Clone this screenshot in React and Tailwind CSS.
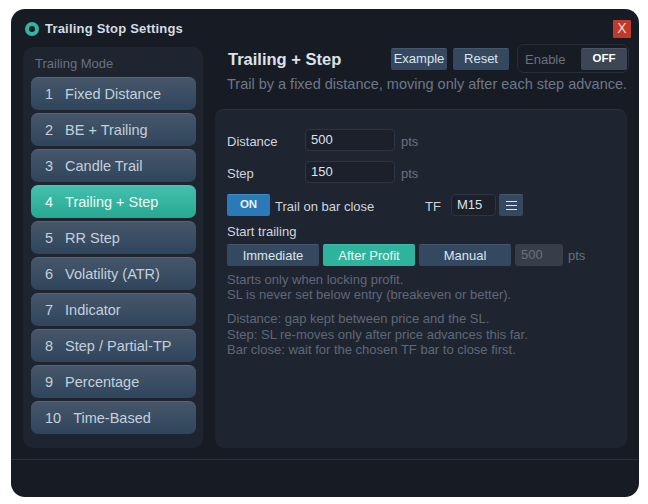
import React from "react";

const modes = [
  ["1", "Fixed Distance"],
  ["2", "BE + Trailing"],
  ["3", "Candle Trail"],
  ["4", "Trailing + Step"],
  ["5", "RR Step"],
  ["6", "Volatility (ATR)"],
  ["7", "Indicator"],
  ["8", "Step / Partial-TP"],
  ["9", "Percentage"],
  ["10", "Time-Based"],
];

function ModeButton({ n, label }) {
  const active = n === "4";
  return (
    <div
      className={
        active
          ? "h-[33px] rounded-[7px] flex items-center text-[14.5px] pl-[14px] pt-[1px] text-[#eafaf6] border-t border-[#4cc4b2] bg-gradient-to-b from-[#43c0ae] to-[#26a892]"
          : "h-[33px] rounded-[7px] flex items-center text-[14.5px] pl-[14px] pt-[1px] text-[#c4d0dd] border-t border-[#56677a] bg-gradient-to-b from-[#465669] to-[#2f455c]"
      }
    >
      <span className="mr-[12px]">{n}</span>
      <span>{label}</span>
    </div>
  );
}

function SmallButton({ children, width }) {
  return (
    <div
      className={`${width} h-[22px] rounded-[2px] bg-[#34495f] border-t border-[#46586c] text-[#dce4ec] text-[13px] flex items-center justify-center`}
    >
      {children}
    </div>
  );
}

function Field({ value, width }) {
  return (
    <div
      className={`${width} h-[22px] rounded-[4px] bg-[#1b202b] border border-[#2e3542] text-[#dfe3e8] text-[13px] flex items-center pl-[5px]`}
    >
      {value}
    </div>
  );
}

export default function App() {
  return (
    <div className="w-[648px] h-[504px] bg-white pt-[9px] pl-[11px] font-['Liberation_Sans',Arial,sans-serif] overflow-hidden">
      <div className="w-[628px] h-[488px] rounded-[14px] bg-[#171b24] flex flex-col overflow-hidden">
        {/* Title bar */}
        <div className="h-[38px] shrink-0 flex items-center pl-[14px] pr-[8px] pt-[1px]">
          <div className="w-[14px] h-[14px] rounded-full border-[4px] border-[#2fb5a0] mr-[6px]" />
          <div className="text-[13px] font-bold text-[#d5dbe2] tracking-[0.2px]">Trailing Stop Settings</div>
          <div className="ml-auto w-[18px] h-[18px] rounded-[1px] bg-[#c0392b] text-[#f3d9d5] text-[14px] flex items-center justify-center">
            X
          </div>
        </div>

        {/* Body */}
        <div className="h-[401px] shrink-0 flex pl-[12px] gap-[12px]">
          {/* Sidebar */}
          <div className="w-[180px] h-[401px] rounded-[10px] bg-[#1f2431] pt-[9px] pl-[8px] pr-[7px]">
            <div className="text-[13px] text-[#68717f] pl-[4px] h-[21px] leading-[16px]">Trailing Mode</div>
            <div className="flex flex-col gap-[3px]">
              {modes.map(([n, label]) => (
                <ModeButton key={n} n={n} label={label} />
              ))}
            </div>
          </div>

          {/* Right column */}
          <div className="w-[412px] flex flex-col -mt-[3px]">
            <div className="h-[65px] shrink-0 pl-[13px]">
              <div className="h-[29px] flex items-center">
                <div className="text-[16.5px] font-bold text-[#dde2e8] pt-[1px]">Trailing + Step</div>
                <div className="ml-auto flex items-center">
                  <div className="flex gap-[6px] mr-[8px]">
                    <SmallButton width="w-[56px]">Example</SmallButton>
                    <SmallButton width="w-[56px]">Reset</SmallButton>
                  </div>
                  <div className="w-[112px] h-[29px] -mr-[2px] rounded-[7px] border border-[#272d39] flex items-center pl-[7px] pr-[1px]">
                    <span className="text-[13px] text-[#68717f] pt-[2px]">Enable</span>
                    <div className="ml-auto w-[46px] h-[22px] rounded-[2px] bg-[#3c4654] border-t border-[#4c5664] text-white text-[11.5px] font-bold pb-[1px] flex items-center justify-center">
                      OFF
                    </div>
                  </div>
                </div>
              </div>
              <div className="text-[14.5px] text-[#6d7889] mt-[1px] leading-[20px] -ml-[1px] whitespace-nowrap">
                Trail by a fixed distance, moving only after each step advance.
              </div>
            </div>

            {/* Panel */}
            <div className="h-[339px] rounded-[9px] bg-[#1f2431] border-t border-[#2a303c] pl-[12px] pt-[19px]">
              <div className="flex items-center h-[22px]">
                <div className="w-[78px] text-[13px] text-[#d0d6dd] pt-[3px]">Distance</div>
                <Field value="500" width="w-[90px]" />
                <div className="ml-[6px] text-[13px] text-[#68717f] pt-[3px]">pts</div>
              </div>
              <div className="flex items-center h-[22px] mt-[10px]">
                <div className="w-[78px] text-[13px] text-[#d0d6dd] pt-[3px]">Step</div>
                <Field value="150" width="w-[90px]" />
                <div className="ml-[6px] text-[13px] text-[#68717f] pt-[3px]">pts</div>
              </div>
              <div className="flex items-center h-[22px] mt-[11px]">
                <div className="w-[43px] h-[22px] rounded-[2px] bg-[#2a7ab8] border-t border-[#3c8cc8] text-[#e6f1f9] text-[11.5px] font-bold pb-[1px] flex items-center justify-center">
                  ON
                </div>
                <div className="ml-[5px] w-[150px] text-[13px] text-[#d0d6dd] pt-[4px]">Trail on bar close</div>
                <div className="w-[26px] text-[13px] text-[#d0d6dd] pt-[3px]">TF</div>
                <Field value="M15" width="w-[45px]" />
                <div className="ml-[3px] w-[24px] h-[22px] rounded-[2px] bg-[#34495f] border-t border-[#46586c] text-[#dce4ec] flex items-center justify-center">
                  <svg width="11" height="9" viewBox="0 0 11 9" fill="none" stroke="#dce4ec" strokeWidth="1">
                    <path d="M0 .5h11M0 4.5h11M0 8.5h11" />
                  </svg>
                </div>
              </div>
              <div className="mt-[8px] h-[16px] text-[13px] leading-[16px] text-[#d0d6dd]">Start trailing</div>
              <div className="flex items-center h-[22px] mt-[4px] gap-[4px]">
                <div className="w-[92px] h-[22px] rounded-[2px] bg-[#34495f] border-t border-[#46586c] text-[#dce4ec] text-[13px] flex items-center justify-center">
                  Immediate
                </div>
                <div className="w-[92px] h-[22px] rounded-[2px] bg-[#2fb39c] border-t border-[#3cbda7] text-[#eafaf6] text-[13px] flex items-center justify-center">
                  After Profit
                </div>
                <div className="w-[92px] h-[22px] rounded-[2px] bg-[#34495f] border-t border-[#46586c] text-[#dce4ec] text-[13px] flex items-center justify-center">
                  Manual
                </div>
                <div className="w-[48px] h-[22px] rounded-[3px] bg-[#383e49] text-[#687180] text-[13px] flex items-center pl-[6px]">
                  500
                </div>
                <div className="ml-[1px] text-[13px] text-[#68717f] pt-[2px]">pts</div>
              </div>
              <div className="mt-[6px] text-[13px] leading-[15px] text-[#5f6877] whitespace-nowrap">
                <div>Starts only when locking profit.</div>
                <div>SL is never set below entry (breakeven or better).</div>
              </div>
              <div className="mt-[9px] text-[13px] leading-[15.5px] text-[#5f6877] whitespace-nowrap">
                <div>Distance: gap kept between price and the SL.</div>
                <div>Step: SL re-moves only after price advances this far.</div>
                <div>Bar close: wait for the chosen TF bar to close first.</div>
              </div>
            </div>
          </div>
        </div>

        {/* Footer */}
        <div className="mt-[11px] flex-1 border-t border-[#2c313c]" />
      </div>
    </div>
  );
}
